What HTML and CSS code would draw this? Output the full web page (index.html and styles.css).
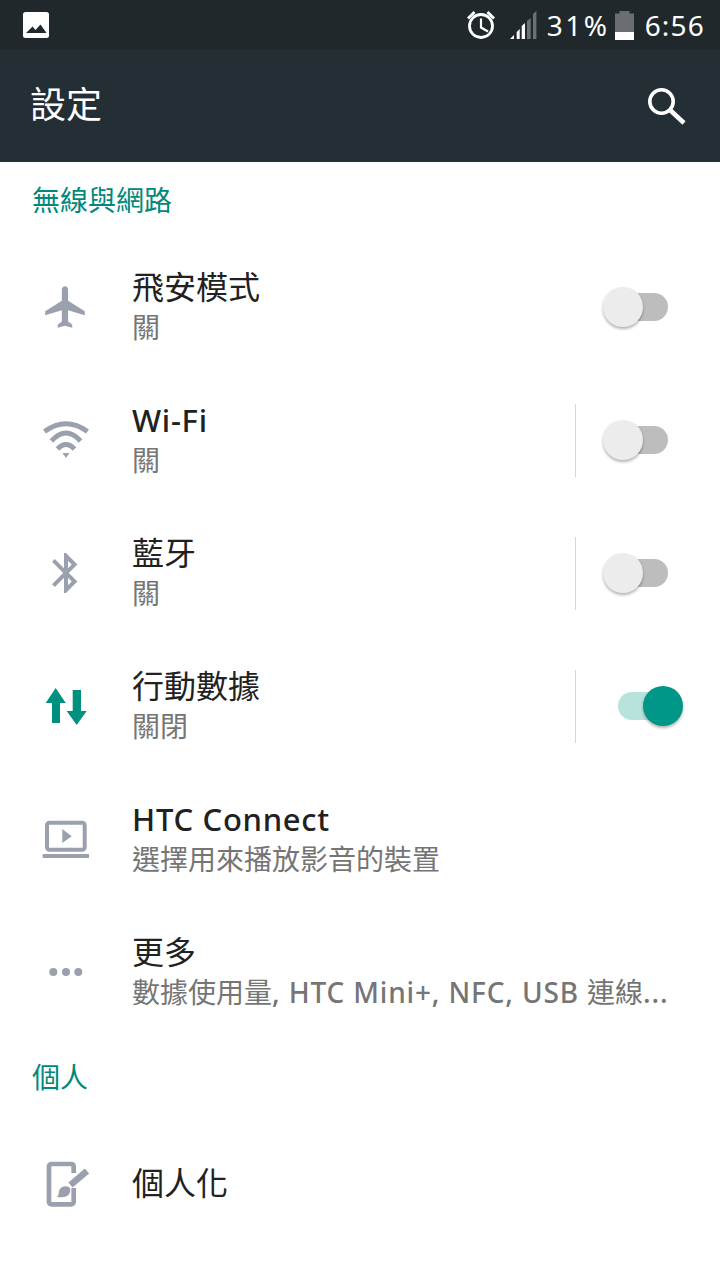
FILE: index.html
```html
<!DOCTYPE html>
<html lang="zh-Hant">
<head>
    <meta charset="UTF-8">
    <meta name="viewport" content="width=device-width, initial-scale=1.0">
    <title>設定</title>
    <link rel="stylesheet" href="styles.css">
</head>
<body>
    <div class="status-bar">
        <svg class="status-image" width="26" height="26" viewBox="0 0 26 26">
            <rect width="26" height="26" rx="2.5" fill="#fff"/>
            <path d="M3 21l6.500-6.500 3 3.500 5-5.500 6 8.500z" fill="#21282b"/>
        </svg>
        <div class="status-right">
            <svg class="status-alarm" width="30" height="30" viewBox="0 0 30 30" fill="none" stroke="#fff">
                <circle cx="15" cy="16" r="11.500" stroke-width="2.800"/>
                <path d="M15 8.500V17.500l7 4" stroke-width="2.200"/>
                <path d="M2 8.500L8.500 2M28 8.500L21.500 2" stroke-width="2.800"/>
            </svg>
            <svg class="status-signal" width="27" height="28" viewBox="0 0 27 28">
                <path d="M0 28l4-4v4z" fill="#fff"/>
                <path d="M6.700 21l3-3v10h-3zM11.700 15l3.300-3v16h-3.300z" fill="#fff"/>
                <path d="M17 10l3.700-3v21H17zM23 3l3.400-3v28H23z" fill="#6c7274"/>
            </svg>
            <span class="status-text status-percent">31%</span>
            <svg class="status-battery" width="19" height="29" viewBox="0 0 19 29">
                <path d="M4.500 0h10v2.500H19V29H0V2.500h4.500z" fill="#6a6e70"/>
                <rect y="21" width="19" height="8" fill="#fff"/>
            </svg>
            <span class="status-text">6:56</span>
        </div>
    </div>

    <header class="app-bar">
        <h1 class="app-title">設定</h1>
        <svg width="40" height="40" viewBox="0 0 40 40" fill="none" stroke="#fff">
            <circle cx="13.500" cy="15.500" r="11.700" stroke-width="3.600"/>
            <path d="M22 24l14 13" stroke-width="4.500"/>
        </svg>
    </header>

    <h2 class="section-title">無線與網路</h2>

    <div class="row">
        <div class="row-icon">
            <svg width="50" height="50" viewBox="0 0 24 24" fill="#9aa0ad">
                <path d="M21 16v-2l-8-5V3.500c0-.83-.67-1.500-1.500-1.500S10 2.670 10 3.500V9l-8 5v2l8-2.500V19l-2 1.500V22l3.500-1 3.500 1v-1.500L13 19v-5.500l8 2.500z"/>
            </svg>
        </div>
        <div class="row-text">
            <div class="row-title">飛安模式</div>
            <div class="row-sub">關</div>
        </div>
        <div class="switch"><span class="track"></span><span class="thumb"></span></div>
    </div>

    <div class="row">
        <div class="row-icon">
            <svg width="48" height="48" viewBox="0 0 48 48" fill="none" stroke="#9aa0ad" stroke-width="5">
                <path d="M2.500 15.500Q24 0 45.500 15.500M9.500 25Q24 9 38.500 25M15.500 33Q24 24 32.500 33"/>
                <path d="M20.500 37h7L24 42z" fill="#9aa0ad" stroke="none"/>
            </svg>
        </div>
        <div class="row-text">
            <div class="row-title latin">Wi-Fi</div>
            <div class="row-sub">關</div>
        </div>
        <div class="row-divider"></div>
        <div class="switch"><span class="track"></span><span class="thumb"></span></div>
    </div>

    <div class="row">
        <div class="row-icon">
            <svg width="48" height="48" viewBox="0 0 24 24" fill="#9aa0ad">
                <path d="M17.710 7.710L12 2h-1v7.590L6.410 5 5 6.410 10.590 12 5 17.590 6.410 19 11 14.410V22h1l5.710-5.710-4.300-4.290 4.300-4.290zM13 5.830l1.880 1.880L13 9.590V5.830zm1.880 10.460L13 18.170v-3.760l1.880 1.880z"/>
            </svg>
        </div>
        <div class="row-text">
            <div class="row-title">藍牙</div>
            <div class="row-sub">關</div>
        </div>
        <div class="row-divider"></div>
        <div class="switch"><span class="track"></span><span class="thumb"></span></div>
    </div>

    <div class="row">
        <div class="row-icon">
            <svg width="48" height="48" viewBox="0 0 48 48" fill="#00907f">
                <path d="M13.700 6l10 15H18v20h-8V21H3.700z"/>
                <path d="M30.700 8H39v21h5.700l-10 14-10-14h6z"/>
            </svg>
        </div>
        <div class="row-text">
            <div class="row-title">行動數據</div>
            <div class="row-sub">關閉</div>
        </div>
        <div class="row-divider"></div>
        <div class="switch switch-on"><span class="track"></span><span class="thumb"></span></div>
    </div>

    <div class="row">
        <div class="row-icon">
            <svg width="48" height="48" viewBox="0 0 48 48" fill="#9aa0ad">
                <rect x="5" y="7.700" width="37.700" height="27" rx="2.500" fill="none" stroke="#9aa0ad" stroke-width="4"/>
                <rect x="0.700" y="39" width="46.300" height="4"/>
                <path d="M20.300 14l9.400 7.300-9.400 6.700z"/>
            </svg>
        </div>
        <div class="row-text">
            <div class="row-title latin">HTC Connect</div>
            <div class="row-sub">選擇用來播放影音的裝置</div>
        </div>
    </div>

    <div class="row">
        <div class="row-icon">
            <svg width="48" height="48" viewBox="0 0 48 48" fill="#9aa0ad">
                <circle cx="11.300" cy="24" r="4"/>
                <circle cx="24" cy="24" r="4"/>
                <circle cx="36.300" cy="24" r="4"/>
            </svg>
        </div>
        <div class="row-text">
            <div class="row-title">更多</div>
            <div class="row-sub">數據使用量<span class="latin-sub">, HTC Mini+, NFC, USB </span>連線<span class="latin-sub">...</span></div>
        </div>
    </div>

    <h2 class="section-title section-personal">個人</h2>

    <div class="row">
        <div class="row-icon">
            <svg width="48" height="48" viewBox="0 0 48 48" fill="none" stroke="#9aa0ad">
                <path d="M31.700 14V7.500a2.500 2.500 0 0 0-2.500-2.500H9.500A2.500 2.500 0 0 0 7 7.500v35.400a2.500 2.500 0 0 0 2.500 2.500h19.700a2.500 2.500 0 0 0 2.500-2.500V29" stroke-width="4.700"/>
                <path d="M45 12L28.500 26" stroke-width="6.500"/>
                <path d="M27 28c-4-2-9 0-10 4 0 3-1 5-2 6 5 1 12 0 13-5 .4-2 .5-3-1-5z" fill="#9aa0ad" stroke="none"/>
            </svg>
        </div>
        <div class="row-text">
            <div class="row-title">個人化</div>
        </div>
    </div>
</body>
</html>
```

FILE: styles.css
```css
body {
    font-family: 'Noto Sans', 'Noto Sans CJK TC', sans-serif;
    margin: 0;
    padding: 0;
    background-color: #fff;
}

.status-bar {
    display: flex;
    justify-content: space-between;
    align-items: center;
    height: 50px;
    padding: 0 15px 0 23px;
    background-color: #21282b;
}

.status-right {
    display: flex;
    align-items: center;
}

.status-alarm {
    margin-right: 14px;
}

.status-signal {
    margin-right: 10px;
}

.status-text {
    color: #fff;
    font-size: 28px;
    line-height: 50px;
    letter-spacing: 1.2px;
}

.status-percent {
    margin-right: 5px;
    letter-spacing: 2.5px;
}

.status-battery {
    margin-right: 11px;
}

.app-bar {
    display: flex;
    justify-content: space-between;
    align-items: center;
    height: 112px;
    padding: 0 32px;
    background-color: #242e35;
}

.app-title {
    margin: 0 0 7px -2px;
    color: #fff;
    font-size: 36px;
    font-weight: 400;
}

.section-title {
    display: flex;
    align-items: center;
    box-sizing: border-box;
    height: 78px;
    margin: 0;
    padding: 0 0 4px 32px;
    color: #00897b;
    font-size: 28px;
    font-weight: 400;
}

.section-personal {
    padding-bottom: 2px;
}

.row {
    display: flex;
    align-items: center;
    height: 133px;
    padding-right: 37px;
}

.row-icon {
    display: flex;
    justify-content: center;
    flex: none;
    width: 132px;
}

.row-text {
    flex: 1;
    min-width: 0;
}

.row-title {
    color: #212121;
    font-size: 32px;
    line-height: 42px;
}

.row-title.latin {
    font-size: 31px;
    font-weight: 500;
    letter-spacing: 0.7px;
}

.row-sub {
    margin-bottom: 2px;
    color: #757575;
    font-size: 28px;
    line-height: 38px;
    white-space: nowrap;
}

.latin-sub {
    font-weight: 500;
    letter-spacing: 0.85px;
}

.row-divider {
    width: 1px;
    height: 73px;
    margin: 2px 27px 0 0;
    background-color: #d6d6d6;
}

.switch {
    position: relative;
    flex: none;
    width: 80px;
    height: 40px;
}

.track {
    position: absolute;
    top: 6px;
    left: 15px;
    width: 50px;
    height: 28px;
    border-radius: 14px;
    background-color: #bdbdbd;
}

.thumb {
    position: absolute;
    top: 0;
    left: 0;
    width: 40px;
    height: 40px;
    border-radius: 50%;
    background-color: #ececec;
    box-shadow: 0 2px 3px rgba(0, 0, 0, 0.3);
}

.switch-on .track {
    background-color: #b8e2dc;
}

.switch-on .thumb {
    left: 40px;
    background-color: #009688;
}
```
